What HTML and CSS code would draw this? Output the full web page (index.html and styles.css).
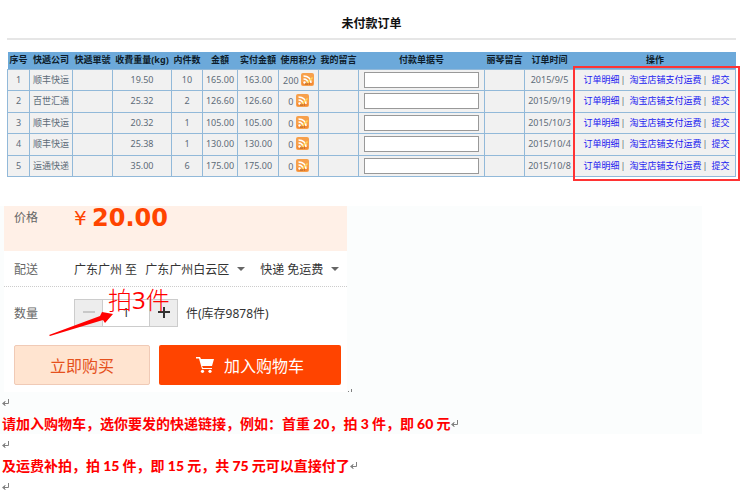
FILE: index.html
```html
<!DOCTYPE html>
<html lang="zh-CN">
<head>
<meta charset="utf-8">
<title>未付款订单</title>
<link rel="stylesheet" href="styles.css">
</head>
<body>
<svg class="defs" aria-hidden="true">
  <symbol id="rss" viewBox="0 0 13 13">
    <rect width="13" height="13" rx="2" fill="#f7a04b"/>
    <path d="M1 9h11v2q0 1-1 1H2q-1 0-1-1z" fill="#f58a35"/>
    <path d="M2.500 3q7 0 7.500 7M2.500 6q4 0 4.500 4" fill="none" stroke="#fff" stroke-width="1.500"/>
    <circle cx="3.500" cy="9.500" r="1.200" fill="#fff"/>
    <path d="M6 9l5-5 1 1-5 5-2 1z" fill="#ffd95c"/>
    <path d="M4 11h3M8 11h1" stroke="#a8642c"/>
  </symbol>
  <symbol id="ret" viewBox="0 0 8 8">
    <path d="M6.500 0v4.500H1M3.500 2.500l-2 2 2 2" fill="none" stroke="#808080"/>
    <path d="M0 4.500l3-2.500v5z" fill="#808080"/>
  </symbol>
</svg>

<section class="orders">
  <h1>未付款订单</h1>
  <div class="table-wrap">
    <table>
      <colgroup>
        <col class="c-no"><col class="c-company"><col class="c-text"><col class="c-weight"><col class="c-count"><col class="c-sum"><col class="c-paid"><col class="c-text"><col class="c-text"><col class="c-receipt"><col class="c-text"><col class="c-date"><col>
      </colgroup>
      <thead>
        <tr><th>序号</th><th>快遞公司</th><th>快遞單號</th><th>收費重量(kg)</th><th>内件数</th><th>金額</th><th>实付金額</th><th>使用积分</th><th>我的留言</th><th>付款单据号</th><th>丽琴留言</th><th>订单时间</th><th>操作</th></tr>
      </thead>
      <tbody>
        <tr><td>1</td><td>顺丰快运</td><td></td><td>19.50</td><td>10</td><td>165.00</td><td>163.00</td><td>200 <svg class="rss"><use href="#rss"/></svg></td><td></td><td><input type="text" aria-label="付款单据号 1"></td><td></td><td>2015/9/5</td><td class="ops"><a href="#">订单明细</a>|<a href="#">淘宝店铺支付运费</a>|<a href="#">提交</a></td></tr>
        <tr><td>2</td><td>百世汇通</td><td></td><td>25.32</td><td>2</td><td>126.60</td><td>126.60</td><td>0 <svg class="rss"><use href="#rss"/></svg></td><td></td><td><input type="text" aria-label="付款单据号 2"></td><td></td><td>2015/9/19</td><td class="ops"><a href="#">订单明细</a>|<a href="#">淘宝店铺支付运费</a>|<a href="#">提交</a></td></tr>
        <tr><td>3</td><td>顺丰快运</td><td></td><td>20.32</td><td>1</td><td>105.00</td><td>105.00</td><td>0 <svg class="rss"><use href="#rss"/></svg></td><td></td><td><input type="text" aria-label="付款单据号 3"></td><td></td><td>2015/10/3</td><td class="ops"><a href="#">订单明细</a>|<a href="#">淘宝店铺支付运费</a>|<a href="#">提交</a></td></tr>
        <tr><td>4</td><td>顺丰快运</td><td></td><td>25.38</td><td>1</td><td>130.00</td><td>130.00</td><td>0 <svg class="rss"><use href="#rss"/></svg></td><td></td><td><input type="text" aria-label="付款单据号 4"></td><td></td><td>2015/10/4</td><td class="ops"><a href="#">订单明细</a>|<a href="#">淘宝店铺支付运费</a>|<a href="#">提交</a></td></tr>
        <tr><td>5</td><td>运通快递</td><td></td><td>35.00</td><td>6</td><td>175.00</td><td>175.00</td><td>0 <svg class="rss"><use href="#rss"/></svg></td><td></td><td><input type="text" aria-label="付款单据号 5"></td><td></td><td>2015/10/8</td><td class="ops"><a href="#">订单明细</a>|<a href="#">淘宝店铺支付运费</a>|<a href="#">提交</a></td></tr>
      </tbody>
    </table>
    <div class="highlight"></div>
  </div>
</section>

<section class="shade">
  <div class="product-line">
    <div class="product">
      <div class="row price"><span class="label">价格</span><span class="yen">¥</span><strong>20.00</strong></div>
      <div class="row ship">
        <span class="label">配送</span>
        <span>广东广州 至</span>
        <button type="button" class="pick area">广东广州白云区<svg viewBox="0 0 8 4"><path d="M0 0h8L4 4z"/></svg></button>
        <button type="button" class="pick">快递 免运费<svg viewBox="0 0 8 4"><path d="M0 0h8L4 4z"/></svg></button>
      </div>
      <div class="row qty">
        <label class="label" for="qty">数量</label>
        <div class="stepper">
          <button type="button" aria-label="减少"><svg viewBox="0 0 12 12"><path d="M0 5h12" stroke="#c8c8c8" stroke-width="2"/></svg></button>
          <input id="qty" type="text" value="1">
          <button type="button" aria-label="增加"><svg viewBox="0 0 12 12"><path d="M0 5h12M6 0v11" stroke="#333" stroke-width="2"/></svg></button>
        </div>
        <span>件(库存9878件)</span>
        <span class="callout">拍<b>3</b>件</span>
        <svg class="arrow" viewBox="0 0 64 26"><path d="M0 24L51 5 53 1 64 3 56 12 54 9 1 25z" fill="#f00"/></svg>
      </div>
      <div class="actions">
        <button type="button" class="buy">立即购买</button>
        <button type="button" class="cart"><svg viewBox="0 0 18 16"><path d="M0 0h4l1 2h13l-2 7H6l1 2h9v1H6L3 1.500H0z" fill="#fff"/><circle cx="6.500" cy="14.300" r="1.600" fill="#fff"/><circle cx="14" cy="14.300" r="1.600" fill="#fff"/></svg>加入购物车</button>
      </div>
    </div>
    <svg class="tail" viewBox="0 0 5 3"><path d="M0 2h1v1H0zM3 0h1v3H3z" fill="#808080"/></svg>
  </div>
  <p class="note"><svg class="ret"><use href="#ret"/></svg></p>
  <p class="note">请加入购物车，选你要发的快递链接，例如：首重 <b>20</b>，拍 <b>3</b> 件，即 <b>60</b> 元<svg class="ret"><use href="#ret"/></svg></p>
</section>
<section class="rest">
  <p class="note"><svg class="ret"><use href="#ret"/></svg></p>
  <p class="note">及运费补拍，拍 <b>15</b> 件，即 <b>15</b> 元，共 <b>75</b> 元可以直接付了<svg class="ret"><use href="#ret"/></svg></p>
  <p class="note"><svg class="ret"><use href="#ret"/></svg></p>
</section>
</body>
</html>
```
FILE: styles.css
```css
* { box-sizing: border-box; }
body {
  margin: 0;
  background: #fff;
  color: #333;
  font-family: "Noto Sans", "Noto Sans CJK SC", sans-serif;
  overflow: hidden;
}
button, input { font: inherit; color: inherit; margin: 0; padding: 0; }
button { cursor: pointer; }
.defs { display: none; }

.orders { padding: 12px 4px 0 7px; }
h1 {
  margin: 0 0 12px;
  padding-bottom: 2px;
  border-bottom: 2px solid #e6e6e6;
  color: #111;
  font-size: 12px;
  line-height: 24px;
  text-align: center;
}
.table-wrap { position: relative; }
table {
  width: 100%;
  height: 125px;
  table-layout: fixed;
  border-collapse: collapse;
  font-size: 9px;
  line-height: 12px;
  color: #5d6b78;
  white-space: nowrap;
}
th, td { padding: 0; text-align: center; }
th { height: 17px; background: #6ca9da; color: #0c1c2b; }
td { height: 21px; border: 1px solid #92b9d9; background: #f1f1f1; }
.c-no { width: 22px; }
.c-company { width: 43px; }
.c-text { width: 40px; }
.c-weight { width: 59px; }
.c-count { width: 31px; }
.c-sum { width: 35px; }
.c-paid { width: 41px; }
.c-receipt { width: 126px; }
.c-date { width: 50px; }
td input {
  display: block;
  width: 115px;
  height: 16px;
  margin: 0 auto;
  border: 1px solid #999;
  background: #fff;
}
.rss { width: 13px; height: 13px; vertical-align: -2px; }
.ops a { margin: 0 1px 0 4px; color: #2020f0; text-decoration: none; }
.highlight {
  position: absolute;
  top: 14px;
  right: -4px;
  bottom: -4px;
  width: 167px;
  border: 2px solid #f33;
  pointer-events: none;
}

.shade { margin: 29px 38px 0 0; background: #fbfdfd; }
.product-line { display: flex; align-items: flex-end; padding-left: 4px; }
.product { flex: 0 0 343px; background: #fff; font-size: 12px; }
.row { display: flex; align-items: center; padding-left: 10px; white-space: nowrap; }
.label { flex: 0 0 60px; color: #666; }
.price {
  height: 45px;
  align-items: flex-start;
  background: #fff0e7;
  line-height: 24px;
}
.yen, .price strong { color: #ff4400; font-family: "DejaVu Sans", sans-serif; }
.yen { width: 18px; font-size: 20px; }
.price strong { font-size: 24px; }
.ship { height: 36px; border-bottom: 1px dotted #ccc; }
.pick { display: flex; align-items: center; gap: 8px; border: 0; background: none; }
.pick svg { width: 8px; height: 4px; fill: #666; }
.area { margin: 0 15px 0 8px; }
.qty { position: relative; height: 51px; }
.stepper { display: flex; height: 28px; margin-right: 8px; border: 1px solid #ccc; }
.stepper button { display: grid; place-items: center; width: 27px; border: 0; background: #ededed; }
.stepper svg { width: 12px; height: 12px; }
.stepper input { width: 48px; border: solid #ccc; border-width: 0 1px; text-align: center; }
.callout {
  position: absolute;
  left: 104px;
  top: 0;
  color: #f00;
  font-size: 24px;
  line-height: 26px;
  font-family: "Open Sans", "Noto Sans CJK SC", sans-serif;
  font-weight: 300;
}
.callout b { font-weight: 400; }
.arrow { position: absolute; left: 45px; top: 24px; width: 64px; height: 26px; }
.actions { display: flex; gap: 9px; padding: 7px 6px 7px 10px; }
.actions button { height: 40px; border-radius: 2px; font-size: 16px; }
.buy { flex: 0 1 136px; border: 1px solid #f0cab6; background: #ffe4d0; color: #e5511d; }
.cart {
  display: flex;
  flex: 1;
  align-items: center;
  justify-content: center;
  gap: 10px;
  border: 0;
  background: #ff4400;
}
.actions .cart { color: #fff; }
.cart svg { width: 18px; height: 16px; }
.tail { width: 5px; height: 3px; margin-left: 1px; }

.note {
  display: flex;
  align-items: center;
  height: 21px;
  margin: 0;
  padding-left: 2px;
  color: #f00;
  font-family: "Noto Sans CJK SC", sans-serif;
  font-size: 14px;
  font-weight: 700;
  line-height: 21px;
  white-space: pre;
}
.note b { font-family: Lato, sans-serif; }
.ret { width: 8px; height: 8px; }
```
